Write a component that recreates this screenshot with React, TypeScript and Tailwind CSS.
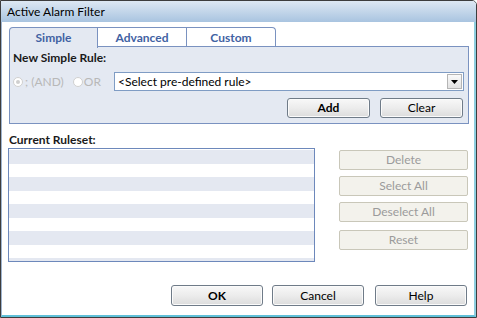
import React from "react";

const font = { fontFamily: "Lato, 'Open Sans', 'Liberation Sans', sans-serif" };

function Btn({ children, bold, w }: { children: React.ReactNode; bold?: boolean; w: string }) {
  return (
    <div
      className={`${w} h-full flex items-center justify-center rounded-[3px] border border-[#6f7b88] bg-gradient-to-b from-[#f8f8f8] via-[#ececec] to-[#dcdcdc] text-[12px] text-black shadow-[inset_0_0_0_1px_#fbfbfb] ${bold ? "font-bold" : ""}`}
    >
      {children}
    </div>
  );
}

function DisBtn({ children }: { children: React.ReactNode }) {
  return (
    <div className="w-[129px] h-[20px] flex items-center justify-center rounded-[2px] border border-[#c9c7b9] bg-[#f3f2ec] text-[12px] text-[#9b9b9b]">
      {children}
    </div>
  );
}

function Radio({ checked }: { checked?: boolean }) {
  return (
    <div className="w-[10px] h-[10px] rounded-full border border-[#d0d0d0] bg-white flex items-center justify-center">
      {checked && <div className="w-[4px] h-[4px] rounded-full bg-[#cfcfcf]" />}
    </div>
  );
}

export default function App() {
  const rows = Array.from({ length: 9 });
  return (
    <div style={font} className="w-[477px] h-[318px] flex flex-col border border-[#3d3d3d] rounded-tr-[5px] overflow-hidden bg-white">
      <div className="h-[21px] shrink-0 flex items-center pl-[6px] text-[12px] text-black bg-gradient-to-b from-[#dde8f3] to-[#a9c4e0]">
        Active Alarm Filter
      </div>
      <div className="flex-1 flex flex-col bg-white border-l border-l-[#9fb4cf] border-r-2 border-r-[#8fcfe0] border-b-2 border-b-[#5fc0d8]">
        {/* tabs */}
        <div className="flex pl-[7px] pt-[5px] h-[25px] shrink-0">
          <div className="w-[89px] h-[21px] flex items-center justify-center rounded-tl-[4px] border border-b-0 border-[#7a92c0] bg-[#e4e9f2] text-[12px] font-bold text-[#4262a3] relative z-10">
            Simple
          </div>
          <div className="w-[89px] h-[20px] flex items-center justify-center border-t border-r border-[#7a92c0] bg-white text-[12px] font-bold text-[#4262a3]">
            Advanced
          </div>
          <div className="w-[89px] h-[20px] flex items-center justify-center rounded-tr-[4px] border-t border-r border-[#7a92c0] bg-white text-[12px] font-bold text-[#4262a3]">
            Custom
          </div>
        </div>
        {/* panel */}
        <div className="ml-[7px] mr-[5px] -mt-[1px] h-[78px] shrink-0 border border-[#7a92c0] bg-[#e4e9f2] pl-[3px] pr-[4px] pt-[3px] flex flex-col">
          <div className="h-[16px] flex items-center text-[12px] font-bold text-[#1a1a1a]">New Simple Rule:</div>
          <div className="mt-[6px] h-[19px] flex items-center">
            <div className="flex items-center">
              <Radio checked />
              <span className="ml-[2px] text-[12px] text-[#b8b8b8]">; (AND)</span>
              <div className="ml-[9px]"><Radio /></div>
              <span className="ml-[1px] text-[12px] text-[#b8b8b8]">OR</span>
            </div>
            <div className="ml-auto w-[350px] h-[19px] border border-[#7f9cc4] bg-white flex items-center pl-[3px] pr-[1px] text-[12px] text-black">
              <span>&lt;Select pre-defined rule&gt;</span>
              <div className="ml-auto w-[15px] h-[15px] border border-[#b5b5b5] bg-gradient-to-b from-[#fafafa] to-[#e2e2e2] flex items-center justify-center">
                <svg width="7" height="4" viewBox="0 0 7 4"><path d="M0 0h7L3.5 4z" fill="#000" /></svg>
              </div>
            </div>
          </div>
          <div className="mt-[7px] h-[20px] flex justify-end gap-[10px] pr-[1px]">
            <Btn w="w-[83px]" bold>Add</Btn>
            <Btn w="w-[83px]">Clear</Btn>
          </div>
        </div>
        {/* ruleset */}
        <div className="mt-[8px] h-[16px] pl-[7px] flex items-center text-[12px] font-bold text-[#1a1a1a] shrink-0">Current Ruleset:</div>
        <div className="flex shrink-0">
          <div className="ml-[6px] w-[307px] h-[114px] border border-[#6d88bb] bg-white pt-[1px] overflow-hidden">
            {rows.map((_, i) => (
              <div key={i} className={`h-[13.5px] ${i % 2 === 0 ? "bg-[#e4e8f1]" : "bg-white"}`} />
            ))}
          </div>
          <div className="ml-auto mr-[6px] pt-[2px] flex flex-col">
            <DisBtn>Delete</DisBtn>
            <div className="mt-[6px]"><DisBtn>Select All</DisBtn></div>
            <div className="mt-[6px]"><DisBtn>Deselect All</DisBtn></div>
            <div className="mt-[8px]"><DisBtn>Reset</DisBtn></div>
          </div>
        </div>
        <div className="flex-1" />
        <div className="h-[21px] mb-[9px] mr-[7px] flex justify-end shrink-0">
          <Btn w="w-[92px]" bold>OK</Btn>
          <div className="ml-[9px] h-full"><Btn w="w-[92px]">Cancel</Btn></div>
          <div className="ml-[11px] h-full"><Btn w="w-[92px]">Help</Btn></div>
        </div>
      </div>
    </div>
  );
}
